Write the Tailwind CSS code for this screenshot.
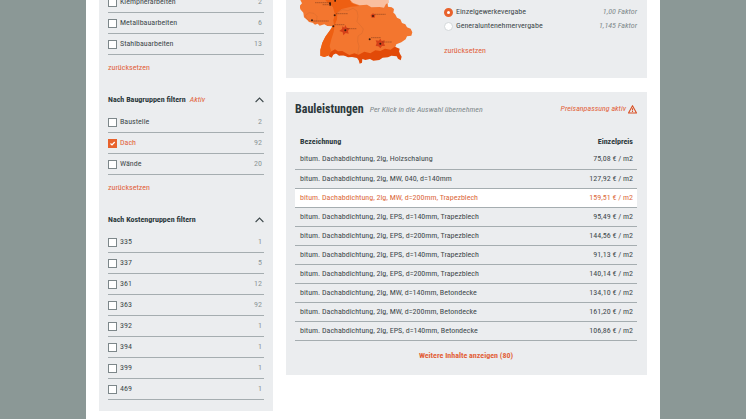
<!DOCTYPE html>
<html lang="de">
  <head>
    <meta charset="UTF-8" />
    <meta name="viewport" content="width=device-width, initial-scale=1.0" />
    <title>Bauleistungen</title>
    <script src="https://cdn.jsdelivr.net/npm/@tailwindcss/browser@4"></script>
  </head>
  <body class="bg-[#8b9896] text-[#3f4a4d] font-['Roboto_Condensed',Roboto,sans-serif] text-[8px] leading-3 overflow-x-hidden">
    <div class="flow-root max-w-[574px] min-h-screen mx-auto bg-white overflow-hidden">
      <div class="flex items-start gap-[13px] px-[13px] -mt-2 pb-2">
        <!-- Filter -->
        <aside class="w-[174px] shrink-0 bg-[#ebedef] px-[9px] pb-[11px]">
          <section>
            <ul id="gewerke"></ul>
            <a href="#" class="block w-fit mt-[7px] text-[#e2623a]">zurücksetzen</a>
          </section>

          <section class="mt-[14px]">
            <h3 class="h-6 flex items-center font-bold text-[#2c383b]">
              Nach Baugruppen filtern
              <em class="ml-1 font-normal text-[#e2623a]">Aktiv</em>
              <button type="button" aria-label="Baugruppen einklappen" class="ml-auto">
                <svg class="w-[9px] h-[9px]" viewBox="0 0 9 9" fill="none" stroke="#3f4a4d" stroke-width="1.1"><path d="M.6 6 4.500 2.100 8.400 6" /></svg>
              </button>
            </h3>
            <ul id="baugruppen"></ul>
            <a href="#" class="block w-fit mt-[7px] text-[#e2623a]">zurücksetzen</a>
          </section>

          <section class="mt-[14px]">
            <h3 class="h-6 flex items-center font-bold text-[#2c383b]">
              Nach Kostengruppen filtern
              <button type="button" aria-label="Kostengruppen einklappen" class="ml-auto">
                <svg class="w-[9px] h-[9px]" viewBox="0 0 9 9" fill="none" stroke="#3f4a4d" stroke-width="1.1"><path d="M.6 6 4.500 2.100 8.400 6" /></svg>
              </button>
            </h3>
            <ul id="kostengruppen"></ul>
          </section>
        </aside>

        <main class="flex-1 min-w-0">
          <!-- Preisanpassung -->
          <section class="bg-[#ebedef] flex pl-[14px] pr-[10px] pb-[13px]">
            <svg class="w-[113px] h-[73px] shrink-0" viewBox="45 -24 339 219">
              <path fill="#f3762f" d="M48-27 L46 0 51 10 44 18 46 28 55 38 57 52 66 59 72 66 83 68 90 74 98 71 104 77 118 73 127 78 142 79 134 92 121 110 112 128 106 150 106 167 118 171 130 165 148 160 170 166 200 170 250 172 300 162 344 160 340 148 331 141 334 133 349 127 362 118 366 109 379 107 382 97 377 86 366 82 361 73 351 69 346 58 336 53 330 42 325 38 327 27 320 22 309 20 304-27Z" />
              <path fill="#ee5f12" d="M120-27 L122 2 137 14 144 22 150 44 145 60 147 76 134 92 121 110 112 128 106 150 106 167 118 171 130 167 138 152 134 138 139 118 146 96 149 76 156 58 157 38 170 27 198 20 222 18 198 8 194-27Z" />
              <path fill="#f9bf9f" d="M194-27 L195 0 204 9 224 16 246 14 259 22 284 21 297 23 303 12 312 8 309-27Z" />
              <path fill="#e24a08" d="M130 168 L137 155 150 148 159 154 172 153 181 158 193 165 208 160 221 164 238 155 256 160 271 151 286 153 300 146 317 149 329 140 344 146 342 156 350 170 347 181 339 176 335 169 319 167 309 172 293 173 283 180 265 182 255 177 241 180 232 177 231 188 224 191 221 181 216 174 201 171 189 172 176 166 162 167 153 160 145 164 140 173Z" />
              <g fill="none" stroke="#cf672e" stroke-width="1.200">
                <path d="M156 38 L173 29 188 32 204 25 216 33 219 48 216 65 226 76 235 87 231 100 219 108 218 125 222 138 218 162" />
                <path d="M61 46 L72 38 87 40 96 49 95 63 81 64 65 57Z" />
              </g>
              <g fill="#d54119">
                <path d="M181 75 L185 83 194 85 189 93 191 101 182 99 175 106 173 97 163 93 171 87 172 79 178 83Z" />
                <path d="M286 116 L290 123 299 121 297 130 300 138 291 138 286 145 280 139 272 138 275 129 272 121 281 122Z" />
                <path d="M264 40 L271 45 269 53 260 53 257 46Z" />
              </g>
              <g fill="#3a1a0c">
                <rect x="132" y="7" width="6" height="5" /><rect x="133" y="12" width="5" height="5" /><rect x="148" y="-1" width="5" height="6" />
                <circle cx="149" cy="46" r="3" /><circle cx="81" cy="61" r="3" /><circle cx="145" cy="79" r="3" />
                <circle cx="181" cy="91" r="3" /><circle cx="264" cy="48" r="3" /><circle cx="254" cy="118" r="3" /><circle cx="286" cy="131" r="3" />
              </g>
              <g stroke="#70351b" stroke-width="2" opacity=".7">
                <path d="M90 8h42M113 14h20M153 41h36M85 63h46M149 74h29M185 86h30M268 43h34M258 113h30M291 126h30" stroke-dasharray="5 1" />
              </g>
            </svg>
            <div class="flex-1 ml-[31px] pt-[13px]">
              <div class="h-[14px] flex items-center">
                <input type="radio" id="einzel" name="vergabe" checked class="appearance-none size-[9px] rounded-full bg-white border border-[#d3d8da] checked:border-[3px] checked:border-[#e8622c]" />
                <label for="einzel" class="ml-[3px]">Einzelgewerkevergabe</label>
                <em class="ml-auto text-[#7f898b]">1,00 Faktor</em>
              </div>
              <div class="h-[14px] flex items-center">
                <input type="radio" id="general" name="vergabe" class="appearance-none size-[9px] rounded-full bg-white border border-[#d3d8da] checked:border-[3px] checked:border-[#e8622c]" />
                <label for="general" class="ml-[3px]">Generaluntenehmervergabe</label>
                <em class="ml-auto text-[#7f898b]">1,145 Faktor</em>
              </div>
              <a href="#" class="block w-fit mt-3 text-[#e2623a]">zurücksetzen</a>
            </div>
          </section>

          <!-- Bauleistungen -->
          <section class="mt-[14px] bg-[#ebedef] pl-[9px] pr-[10px] pt-[9px] pb-[13px]">
            <div class="h-4 flex items-center">
              <h2 class="text-[12px] leading-4 font-bold text-[#2c383b]">Bauleistungen</h2>
              <em class="ml-[6px] mt-[2px] text-[#7f898b]">Per Klick in die Auswahl übernehmen</em>
              <em class="ml-auto text-[#e2623a]">Preisanpassung aktiv</em>
              <svg class="ml-[2px] w-[9px] h-[9px]" viewBox="0 0 9 9" fill="none" stroke="#d94f22" stroke-width="1.1" stroke-linejoin="round"><path d="M4.500 .7 8.500 8H.5Z" /><path d="M4.500 3.200v2.300M4.500 6v1" /></svg>
            </div>
            <table class="w-full mt-4">
              <thead>
                <tr class="h-[17px] text-[#2c383b]">
                  <th class="p-0 pl-[5px] text-left">Bezeichnung</th>
                  <th class="p-0 pr-1 text-right">Einzelpreis</th>
                </tr>
              </thead>
              <tbody id="leistungen"></tbody>
            </table>
            <button type="button" class="block mx-auto mt-[9px] font-bold text-[#e2623a]">Weitere Inhalte anzeigen (80)</button>
          </section>
        </main>
      </div>
    </div>

    <script>
      const filters = {
        gewerke: [['Klempnerarbeiten', 2], ['Metallbauarbeiten', 6], ['Stahlbauarbeiten', 13]],
        baugruppen: [['Baustelle', 2], ['Dach', 92, true], ['Wände', 20]],
        kostengruppen: [['335', 1], ['337', 5], ['361', 12], ['363', 92], ['392', 1], ['394', 1], ['399', 1], ['469', 1]],
      };

      const leistungen = [
        ['bitum. Dachabdichtung, 2lg, Holzschalung', '75,08'],
        ['bitum. Dachabdichtung, 2lg, MW, 040, d=140mm', '127,92'],
        ['bitum. Dachabdichtung, 2lg, MW, d=200mm, Trapezblech', '159,51', true],
        ['bitum. Dachabdichtung, 2lg, EPS, d=140mm, Trapezblech', '95,49'],
        ['bitum. Dachabdichtung, 2lg, EPS, d=200mm, Trapezblech', '144,56'],
        ['bitum. Dachabdichtung, 2lg, EPS, d=140mm, Trapezblech', '91,13'],
        ['bitum. Dachabdichtung, 2lg, EPS, d=200mm, Trapezblech', '140,14'],
        ['bitum. Dachabdichtung, 2lg, MW, d=140mm, Betondecke', '134,10'],
        ['bitum. Dachabdichtung, 2lg, MW, d=200mm, Betondecke', '161,20'],
        ['bitum. Dachabdichtung, 2lg, EPS, d=140mm, Betondecke', '106,86'],
      ];

      Object.entries(filters).forEach(([id, items]) => {
        document.getElementById(id).innerHTML = items.map(([name, count, checked], i) => `
          <li class="h-[21px] flex items-center border-b border-[#a5adb0]">
            <span class="relative size-[9px]">
              <input type="checkbox" id="${id}-${i}" ${checked ? 'checked' : ''} class="block appearance-none size-[9px] bg-white border border-[#7d878a] checked:bg-[#e8622c] checked:border-[#e8622c]" />
              ${checked ? '<svg class="absolute inset-0 pointer-events-none" viewBox="0 0 9 9" fill="none" stroke="#fff" stroke-width="1.2"><path d="M2.500 4.500 4 6 6.700 3" /></svg>' : ''}
            </span>
            <label for="${id}-${i}" class="ml-[3px] ${checked ? 'text-[#e2623a]' : ''}">${name}</label>
            <span class="ml-auto pr-[2px] text-[#8c9698]">${count}</span>
          </li>`).join('');
      });

      document.getElementById('leistungen').innerHTML = leistungen.map(([name, price, active]) => `
        <tr class="h-[19px] border-b border-[#a5adb0] ${active ? 'bg-white text-[#dc6a3c]' : ''}">
          <td class="p-0 pl-[5px]">${name}</td>
          <td class="p-0 pr-1 text-right">${price} € / m2</td>
        </tr>`).join('');
    </script>
  </body>
</html>
